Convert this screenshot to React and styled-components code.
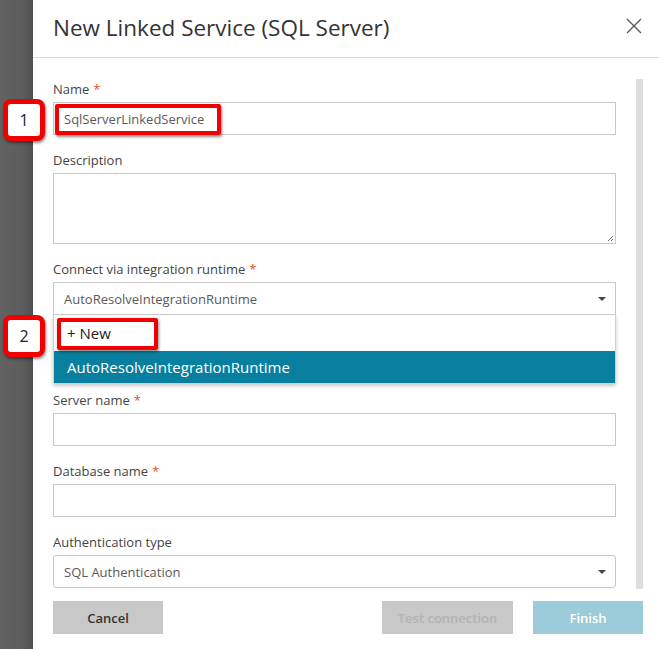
import React from "react";
import styled, { createGlobalStyle } from "styled-components";

const GlobalStyle = createGlobalStyle`
  html, body {
    margin: 0;
    padding: 0;
    background: #5e5e5e;
  }
  body {
    font-family: "Open Sans", "Noto Sans", sans-serif;
    -webkit-font-smoothing: antialiased;
  }
`;

const Screen = styled.div`
  position: relative;
  display: flex;
  width: 659px;
  height: 649px;
  overflow: hidden;
`;

const Backdrop = styled.div`
  width: 33px;
  flex-shrink: 0;
  background: linear-gradient(to right, #626262 0%, #5c5c5c 70%, #4f4f4f 100%);
`;

const Panel = styled.div`
  flex: 1;
  display: flex;
  flex-direction: column;
  background: #fff;
`;

const Header = styled.div`
  height: 58px;
  display: flex;
  align-items: center;
  justify-content: space-between;
  padding: 0 17px 0 20px;
  border-bottom: 1px solid #dcdcdc;
`;

const Title = styled.h1`
  margin: 0 0 2px;
  font-size: 22.5px;
  font-weight: 400;
  color: #333;
`;

const Close = styled.svg`
  margin-bottom: 6px;
`;

const Body = styled.div`
  flex: 1;
  display: flex;
  gap: 20px;
  padding: 0 16px 0 20px;
`;

const Form = styled.div`
  width: 563px;
  display: flex;
  flex-direction: column;
  padding-top: 21px;
`;

const Scrollbar = styled.div`
  width: 7px;
  margin-top: 21px;
  height: 510px;
  background: #dedede;
`;

const Field = styled.div`
  display: flex;
  flex-direction: column;
  margin-bottom: ${(p) => p.$gap ?? 15}px;
`;

const Label = styled.label`
  font-size: 13px;
  line-height: 20px;
  height: 20px;
  margin-bottom: 3px;
  color: #444;
  span {
    color: #e0502b;
    margin-left: 4px;
  }
`;

const Input = styled.div`
  box-sizing: border-box;
  height: ${(p) => p.$height ?? 33}px;
  border: 1px solid #c8c8c8;
  border-radius: ${(p) => (p.$rounded ? 3 : 0)}px;
  padding: 0 10px;
  display: flex;
  align-items: center;
  justify-content: space-between;
  font-size: 13px;
  color: #5a5a5a;
  background: #fff;
  position: relative;
`;

const Grip = styled.svg`
  position: absolute;
  right: 1px;
  bottom: 1px;
`;

const Caret = styled.div`
  width: 0;
  height: 0;
  border-left: 4px solid transparent;
  border-right: 4px solid transparent;
  border-top: 4px solid #444;
  margin-right: -1px;
`;

const Menu = styled.div`
  box-sizing: border-box;
  border: 1px solid #d0d0d0;
  border-top: none;
  box-shadow: 0 2px 4px rgba(0, 0, 0, 0.22);
  margin-bottom: 6px;
  background: #fff;
`;

const MenuItem = styled.div`
  height: ${(p) => p.$height}px;
  display: flex;
  align-items: center;
  padding-left: 13px;
  font-size: 15px;
  color: ${(p) => (p.$active ? "#fff" : "#222")};
  background: ${(p) => (p.$active ? "#087f9e" : "#fff")};
`;

const Footer = styled.div`
  display: flex;
  align-items: center;
  padding: 0 16px 15px 20px;
`;

const Button = styled.button`
  height: 33px;
  width: ${(p) => p.$width}px;
  border: none;
  margin-left: ${(p) => p.$ml ?? 0}px;
  font-family: inherit;
  font-size: 13px;
  font-weight: 600;
  background: ${(p) => p.$bg};
  color: ${(p) => p.$color};
  padding: 0;
`;

const Callout = styled.div`
  position: absolute;
  left: ${(p) => p.$x}px;
  top: ${(p) => p.$y}px;
  width: ${(p) => p.$w}px;
  height: ${(p) => p.$h}px;
  box-sizing: border-box;
  border: 4px solid #f20000;
  border-radius: ${(p) => p.$r ?? 2}px;
  box-shadow: 1px 2px 3px rgba(0, 0, 0, 0.45);
`;

const Badge = styled(Callout)`
  border-width: 5px;
  background: #fff;
  display: flex;
  align-items: center;
  justify-content: center;
  font-size: 16px;
  color: #222;
`;

const CloseIcon = () => (
  <Close width="16" height="16" viewBox="0 0 16 16">
    <path d="M1 1 L15 15 M15 1 L1 15" stroke="#555" strokeWidth="1.3" fill="none" />
  </Close>
);

export default function App() {
  return (
    <>
      <GlobalStyle />
      <Screen>
        <Backdrop />
        <Panel>
          <Header>
            <Title>New Linked Service (SQL Server)</Title>
            <CloseIcon />
          </Header>
          <Body>
            <Form>
              <Field>
                <Label>
                  Name<span>*</span>
                </Label>
                <Input>SqlServerLinkedService</Input>
              </Field>
              <Field>
                <Label>Description</Label>
                <Input $height={71}>
                  <Grip width="7" height="7" viewBox="0 0 7 7">
                    <path d="M6 1 L1 6 M6 4 L4 6" stroke="#666" strokeWidth="1" />
                  </Grip>
                </Input>
              </Field>
              <Field $gap={0}>
                <Label>
                  Connect via integration runtime<span>*</span>
                </Label>
                <Input>
                  AutoResolveIntegrationRuntime
                  <Caret />
                </Input>
              </Field>
              <Menu>
                <MenuItem $height={36}>+ New</MenuItem>
                <MenuItem $height={32} $active>
                  AutoResolveIntegrationRuntime
                </MenuItem>
              </Menu>
              <Field>
                <Label>
                  Server name<span>*</span>
                </Label>
                <Input />
              </Field>
              <Field>
                <Label>
                  Database name<span>*</span>
                </Label>
                <Input />
              </Field>
              <Field $gap={13}>
                <Label>Authentication type</Label>
                <Input $rounded>
                  SQL Authentication
                  <Caret />
                </Input>
              </Field>
            </Form>
            <Scrollbar />
          </Body>
          <Footer>
            <Button $width={110} $bg="#c8c8c8" $color="#333">
              Cancel
            </Button>
            <Button $width={131} $ml={219} $bg="#c8c8c8" $color="#b3b3b3">
              Test connection
            </Button>
            <Button $width={110} $ml={20} $bg="#9ccbd9" $color="#fff">
              Finish
            </Button>
          </Footer>
        </Panel>
        <Badge $x={3} $y={99} $w={42} $h={42} $r={8}>
          1
        </Badge>
        <Callout $x={55} $y={104} $w={166} $h={31} />
        <Badge $x={3} $y={315} $w={42} $h={42} $r={8}>
          2
        </Badge>
        <Callout $x={57} $y={318} $w={101} $h={32} />
      </Screen>
    </>
  );
}
